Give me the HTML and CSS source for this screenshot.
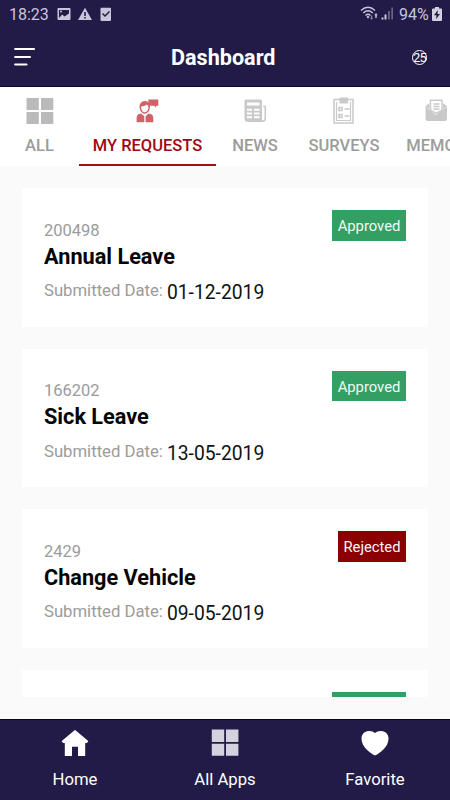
FILE: index.html
```html
<!DOCTYPE html>
<html lang="en">
<head>
<meta charset="utf-8">
<title>Dashboard</title>
<link rel="stylesheet" href="styles.css">
</head>
<body>
<div class="app">
  <div class="status">
    <span class="clock">18:23</span>
    <svg class="status-left" width="56" height="16" viewBox="0 0 56 16">
      <g fill="#c9c5dd"><path fill-rule="evenodd" d="M2 1h10.500q1 0 1 1v10q0 1-1 1H1.500q-1 0-1-1V2q0-1 1-1zM2 3v8l3.200-3.500 2.300 2 4.500-3V3z"/><circle cx="4" cy="4.500" r="1"/>
      <path fill-rule="evenodd" d="M28 .8L35 13H21zM27.200 5v4h1.600V5zm0 5v1.600h1.600V10z"/>
      <path fill-rule="evenodd" d="M44.500.8h8.500q1 0 1 1V13q0 1-1 1h-8.500q-1 0-1-1V1.800q0-1 1-1zM46 6l-1 1 3 3 5-5-1-1-4 4z"/></g>
    </svg>
    <svg class="status-right" width="34" height="16" viewBox="0 0 34 16">
      <g fill="none" stroke="#c9c5dd" stroke-width="1.300"><path d="M1 4.500q7-6.500 14 0M3.200 7q4.800-4.500 9.600 0M5.500 9.400q2.500-2.300 5 0"/></g>
      <path fill="#c9c5dd" d="M6.500 11l1.500-1.500L9.500 11 8 12.500zM14.300 9.200l1.700-2.200 1.700 2.200h-1V12h-1.400V9.200zM21.500 11.500h2v2h-2zM24.500 8.500h2v5h-2z"/>
      <path fill="#8c87a8" d="M11 9.500h1.200V12h1l-1.600 1.800L10 12h1z"/><path fill="#696486" d="M28 5h1.800v8.500H28zM31.300 1.500H33v12h-1.700z"/>
    </svg>
    <span class="charge">94%</span>
    <svg class="battery" width="10" height="15" viewBox="0 0 10 15"><path fill="#d3d0e2" d="M3 0h4v1.500h2q1 0 1 1V13q0 1-1 1H1q-1 0-1-1V2.500q0-1 1-1h2z"/><path fill="#221b48" d="M5.800 3L2 8.200h2.500L4 12.200 8 7H5.500z"/></svg>
  </div>
  <header class="header">
    <svg class="menu" width="22" height="20" viewBox="0 0 22 20"><path d="M1.200 2h18.800M1.200 10h14.800M1.200 17.500h11.300" stroke="#fff" stroke-width="2.200" stroke-linecap="round"/></svg>
    <h1 class="title">Dashboard</h1>
    <span class="count">25</span>
  </header>
  <nav class="tabs">
    <div class="tab tab-all"><svg class="tab-icon" width="28" height="28" viewBox="0 0 28 28"><path fill="#bababa" d="M.5 1h12.300v12H.5zM15 1h12.300v12H15zM.5 15h12.300v12H.5zM15 15h12.300v12H15z"/></svg><span>ALL</span></div>
    <div class="tab tab-requests"><svg class="tab-icon" width="28" height="28" viewBox="0 0 28 28"><g fill="#d0636a" transform="translate(-.7 0)"><path d="M15 2.500h10v6.200h-2.200v1.800l-2-1.800H15z"/><path fill-rule="evenodd" d="M11.500 4c4 0 5.500 3.500 5.100 6.700-.3 3.500-2.700 6-5.100 6s-4.700-2.500-5.200-6C5.900 7 8 4 11.500 4zm2.200 3.500c-1.600 1.300-3.900 2-5.900 2 .1 3.500 1.700 5.800 3.700 5.800s3.600-2.600 3.700-5.300z"/><path d="M7.800 16.600L11 19.300v6H3.300V21q0-3.900 4.500-4.400zM15.300 16.600L12.300 19.300v6H20V21q0-3.900-4.700-4.400z"/></g></svg><span>MY REQUESTS</span></div>
    <div class="tab tab-news"><svg class="tab-icon" width="28" height="28" viewBox="0 0 28 28"><g fill="#c9c9c9"><path fill-rule="evenodd" d="M4.500 2.500h15q1.500 0 1.500 1.500v20.700H6q-2.500 0-2.500-2.500V3.500q0-1 1-1zM6 5.500v3h12.500v-3zM6 11.800v2h5v-2zm7 0v2h5.500v-2zM6 15.500v2h5v-2zm7 0v2h5.500v-2zM6 19.300v2h5v-2zm7 0v2h5.500v-2z"/></g><path d="M22 9.500h2.300v12q0 2.800-3.200 2.800H8" fill="none" stroke="#c9c9c9" stroke-width="1.600"/></svg><span>NEWS</span></div>
    <div class="tab tab-surveys"><svg class="tab-icon" width="28" height="28" viewBox="0 0 28 28"><g fill="none" stroke="#c9c9c9"><path stroke-width="1.500" d="M4 2.500h19v23.500H4z"/><path stroke-width="1.200" d="M6.500 5v18.500h14V5"/><path stroke-width="1.600" d="M9 10.500h3v3H9zM9 17.500h3v3H9zM14.500 12h5M14.500 19h5"/></g><path fill="#c9c9c9" d="M9.500 .5h8.500v6H9.500z"/></svg><span>SURVEYS</span></div>
    <div class="tab tab-memos"><svg class="tab-icon" width="28" height="28" viewBox="0 0 28 28"><path fill="#c9c9c9" d="M3.500 9.500L14 18l11-8.500V22q0 2-2 2H5.500q-2 0-2-2z"/><path fill="#fff" stroke="#c9c9c9" stroke-width="1.400" d="M8.500 3.200h11.500v10l-5.700 3.200-5.800-3.200z"/><path fill="#c9c9c9" d="M7.500 6l-4 3.300 4 3zM21 6l4 3.300-4 3z"/><path stroke="#c9c9c9" stroke-width="1.600" d="M11.500 7h6M11.500 9.500h6M11.500 12h6"/></svg><span>MEMOS</span></div>
  </nav>
  <main class="list">
    <article class="card"><div><p class="num">200498</p><h2 class="name">Annual Leave</h2><p class="date">Submitted Date: <b>01-12-2019</b></p></div><span class="badge">Approved</span></article>
    <article class="card"><div><p class="num">166202</p><h2 class="name">Sick Leave</h2><p class="date">Submitted Date: <b>13-05-2019</b></p></div><span class="badge">Approved</span></article>
    <article class="card"><div><p class="num">2429</p><h2 class="name">Change Vehicle</h2><p class="date">Submitted Date: <b>09-05-2019</b></p></div><span class="badge rejected">Rejected</span></article>
    <article class="card"><div></div><span class="badge"></span></article>
  </main>
  <footer class="bottom">
    <div class="nav"><svg width="28" height="28" viewBox="0 0 28 28"><path fill="#fff" stroke="#fff" stroke-width="1.400" stroke-linejoin="round" d="M14 1.700L1.500 12.200l1 1.200H4.500v13h5.800v-9.400h7.400v9.400h5.800v-13h2l1-1.200z"/></svg><span>Home</span></div>
    <div class="nav"><svg width="28" height="28" viewBox="0 0 28 28"><path fill="#d5d2df" d="M.8 .5h12.400V13H.8zM15 .5h12.400V13H15zM.8 14.800h12.400v12H.8zM15 14.800h12.400v12H15z"/></svg><span>All Apps</span></div>
    <div class="nav"><svg width="28" height="28" viewBox="0 0 28 28"><path fill="#fff" d="M14 26.500C9 24 .5 18 .5 9.500.5 1.500 10 .2 14 4c4-3.800 13.500-2.500 13.500 5.500C27.500 18 19 24 14 26.500z"/></svg><span>Favorite</span></div>
  </footer>
</div>
</body>
</html>
```
FILE: styles.css
```css
* { box-sizing: border-box; }
body, h1, h2, p { margin: 0; }
body { font-family: Roboto, sans-serif; background: #fafafa; }
.app { width: 450px; height: 800px; overflow: hidden; display: flex; flex-direction: column; }
.status { height: 28px; flex: none; background: #221b48; color: #c9c5dd; display: flex; align-items: center; padding-left: 9px; }
.clock { width: 48px; padding-top: 1px; font-size: 16px; line-height: 28px; }
.status-left { margin-top: 1px; }
.status-right { margin-left: 247px; margin-top: -1px; }
.charge { width: 34px; margin-left: 5px; padding-top: 1px; font-size: 16px; line-height: 28px; }
.battery { margin-left: -1px; }
.header { height: 59px; flex: none; background: #221b48; border-bottom: 1px solid #0c0626; display: flex; align-items: center; padding: 0 23px 0 14px; color: #fff; }
.menu { flex: none; }
.title { flex: none; width: 105px; margin-left: 135px; padding-top: 2px; font-size: 21.6px; line-height: 26px; font-weight: 700; white-space: nowrap; }
.count { flex: none; width: 15px; height: 15px; margin-left: auto; border: 1px solid #fff; border-radius: 50%; font-size: 13px; line-height: 14px; letter-spacing: -0.7px; display: flex; justify-content: center; }
.tabs { height: 79px; flex: none; background: #fff; display: flex; overflow: hidden; color: #9c9c9c; }
.tab { flex: none; height: 79px; padding-top: 10px; display: flex; flex-direction: column; align-items: center; font-size: 16.5px; line-height: 20px; font-weight: 500; white-space: nowrap; }
.tab-icon { margin-bottom: 11px; flex: none; }
.tab-all { width: 79px; }
.tab-requests { width: 137px; color: #a00712; border-bottom: 2px solid #a90d18; }
.tab-news { width: 78px; }
.tab-surveys { width: 100px; }
.tab-memos { width: 84px; }
.list { height: 531px; flex: none; margin-bottom: 22px; padding: 22px 22px 0; overflow: hidden; display: flex; flex-direction: column; gap: 22px; }
.card { height: 138.5px; flex: none; background: #fff; padding: 22px; display: flex; justify-content: space-between; align-items: flex-start; }
.num { margin-top: 10.8px; font-size: 16.5px; line-height: 20px; color: #9b9b9b; }
.name { margin-top: 2px; font-size: 21.7px; line-height: 28px; font-weight: 700; color: #050505; white-space: nowrap; }
.date { margin-top: 8.7px; display: flex; gap: 4px; font-size: 16.7px; line-height: 24px; color: #9b9b9b; white-space: nowrap; }
.date b { font-size: 19.3px; line-height: 28px; font-weight: 400; color: #111; }
.badge { width: 74px; height: 30.5px; background: #349f63; color: #f1faf4; font-size: 14.8px; line-height: 32px; text-align: center; }
.rejected { width: 68px; background: #8b0000; }
.bottom { height: 81px; flex: none; background: #221b48; border-top: 1px solid #0c0626; display: flex; color: #fff; }
.nav { width: 150px; padding-top: 9px; display: flex; flex-direction: column; align-items: center; gap: 12.500px; font-size: 16.7px; line-height: 20px; }
```
